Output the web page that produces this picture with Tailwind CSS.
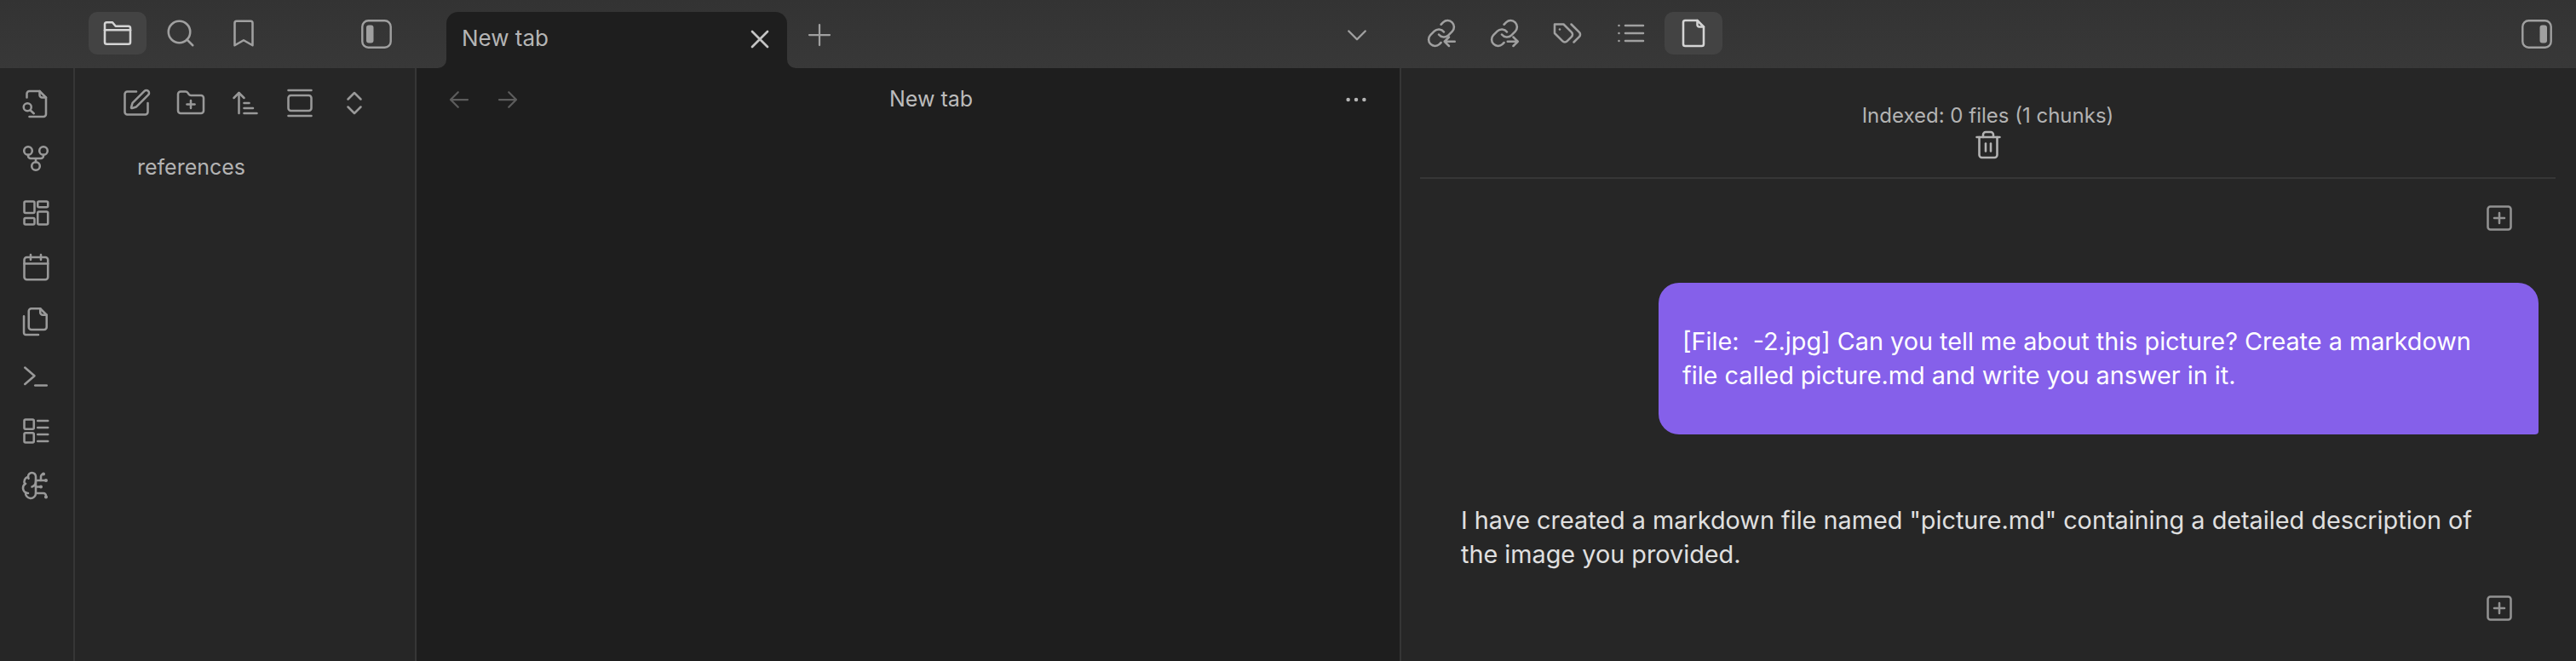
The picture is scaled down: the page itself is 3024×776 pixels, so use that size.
<!DOCTYPE html>
<html lang="en">
<head>
  <meta charset="UTF-8" />
  <title>New tab</title>
  <script src="https://cdn.jsdelivr.net/npm/@tailwindcss/browser@4"></script>
</head>
<body class="bg-[#1e1e1e] h-screen overflow-hidden flex flex-col font-['Inter',sans-serif]">

  <!-- title bar -->
  <div class="h-[80px] shrink-0 bg-linear-to-b from-[#333333] to-[#383838] flex items-start text-[#a0a0a0]">
    <div class="w-[524px] shrink-0 flex pl-[104px] pt-[14px]">
      <div class="w-[68px] h-[50px] rounded-[10px] bg-[#434343] flex items-center justify-center text-[#d4d4d4]">
        <svg class="w-9 h-9" viewBox="0 0 24 24" fill="none" stroke="currentColor" stroke-width="1.7" stroke-linecap="round" stroke-linejoin="round"><path d="M2 19V5a1.5 1.5 0 0 1 1.5-1.5H8l2.5 3h10A1.5 1.5 0 0 1 22 8v11a1.5 1.5 0 0 1-1.5 1.5h-17A1.5 1.5 0 0 1 2 19z"/><path d="M2 9.5h20"/></svg>
      </div>
      <div class="w-[74px] ml-[3px] h-[50px] flex items-center justify-center">
        <svg class="w-9 h-9" viewBox="0 0 24 24" fill="none" stroke="currentColor" stroke-width="1.7" stroke-linecap="round" stroke-linejoin="round"><circle cx="11" cy="11" r="8.5"/><path d="m21.5 21.5-4.5-4.5"/></svg>
      </div>
      <div class="w-[74px] h-[50px] flex items-center justify-center">
        <svg class="w-9 h-9" viewBox="0 0 24 24" fill="none" stroke="currentColor" stroke-width="1.7" stroke-linecap="round" stroke-linejoin="round"><path d="M19 21.5l-7-4-7 4V4a1.5 1.5 0 0 1 1.5-1.5h11A1.5 1.5 0 0 1 19 4z"/></svg>
      </div>
      <div class="ml-[101px] pt-[9px]">
        <svg class="w-[36px] h-[34px]" viewBox="0 0 36 34" fill="none"><rect x="1.3" y="1.3" width="33.4" height="31.4" rx="7" stroke="currentColor" stroke-width="2.4"/><rect x="6" y="6.5" width="8.5" height="21" rx="3" fill="currentColor"/></svg>
      </div>
    </div>

    <!-- tab -->
    <div class="relative w-[400px] h-[66px] mt-[14px] shrink-0 bg-[#1e1e1e] rounded-t-[14px] flex items-start justify-between pl-[18px] pr-[14px] pt-[14px] text-[#b5b5b5]">
      <svg class="absolute left-[-10px] bottom-0 w-[10px] h-[10px]" viewBox="0 0 10 10"><path d="M10 0v10H0a10 10 0 0 0 10-10z" fill="#1e1e1e"/></svg>
      <svg class="absolute right-[-10px] bottom-0 w-[10px] h-[10px]" viewBox="0 0 10 10"><path d="M0 0v10h10A10 10 0 0 1 0 0z" fill="#1e1e1e"/></svg>
      <span class="text-[26px] leading-[34px]">New tab</span>
      <svg class="w-[36px] h-[36px]" viewBox="0 0 24 24" fill="none" stroke="#c4c4c4" stroke-width="1.8" stroke-linecap="round"><path d="M6 6l12 12M18 6L6 18"/></svg>
    </div>
    <div class="w-[36px] h-[36px] ml-[20px] mt-[23px] shrink-0">
      <svg class="w-9 h-9" viewBox="0 0 24 24" fill="none" stroke="currentColor" stroke-width="1.5" stroke-linecap="round"><path d="M12 4v16M4 12h16"/></svg>
    </div>

    <div class="w-[36px] h-[36px] ml-[595px] mt-[23px] shrink-0">
      <svg class="w-9 h-9" viewBox="0 0 24 24" fill="none" stroke="currentColor" stroke-width="1.6" stroke-linecap="round" stroke-linejoin="round"><path d="m5.5 9 6.500 6.500 6.500-6.500"/></svg>
    </div>

    <!-- right leaf tabs -->
    <div class="flex items-center gap-[38px] ml-[63px] mt-[21px] shrink-0">
      <svg class="w-9 h-9" viewBox="0 0 24 24" fill="none" stroke="currentColor" stroke-width="1.7" stroke-linecap="round" stroke-linejoin="round"><path d="M10 13a5 5 0 0 0 7.540.54l3-3a5 5 0 0 0-7.070-7.070l-1.720 1.710"/><path d="M14 11a5 5 0 0 0-7.540-.54l-3 3a5 5 0 0 0 7.070 7.070l1.200-1.200"/><path d="M22.500 18.500h-8M18 15l-3.500 3.500 3.500 3.500"/></svg>
      <svg class="w-9 h-9" viewBox="0 0 24 24" fill="none" stroke="currentColor" stroke-width="1.7" stroke-linecap="round" stroke-linejoin="round"><path d="M10 13a5 5 0 0 0 7.540.54l3-3a5 5 0 0 0-7.070-7.070l-1.720 1.710"/><path d="M14 11a5 5 0 0 0-7.540-.54l-3 3a5 5 0 0 0 7.070 7.070l1.200-1.200"/><path d="M14.500 18.500h8M19 15l3.500 3.500-3.500 3.500"/></svg>
      <svg class="w-9 h-9" viewBox="0 0 24 24" fill="none" stroke="currentColor" stroke-width="1.700" stroke-linecap="round" stroke-linejoin="round"><path d="M9 5H2v7l6.290 6.290c.94.94 2.480.94 3.420 0l3.580-3.580c.94-.94.94-2.480 0-3.420L9 5Z"/><path d="M6 9.010V9"/><path d="m15 5 6.300 6.300a2.400 2.400 0 0 1 0 3.400L17 19"/></svg>
      <svg class="w-9 h-9" viewBox="0 0 24 24" fill="none" stroke="currentColor" stroke-width="1.700" stroke-linecap="round"><path d="M8 6h14M8 12h14M8 18h14M3 6h.01M3 12h.01M3 18h.01"/></svg>
    </div>
    <div class="w-[68px] h-[50px] ml-[22px] mt-[14px] shrink-0 rounded-[10px] bg-[#434343] flex items-center justify-center text-[#d4d4d4]">
      <svg class="w-9 h-9" viewBox="0 0 24 24" fill="none" stroke="currentColor" stroke-width="1.700" stroke-linecap="round" stroke-linejoin="round"><path d="M15 2H5.500A1.500 1.500 0 0 0 4 3.500v17A1.500 1.500 0 0 0 5.500 22h13a1.500 1.500 0 0 0 1.500-1.500V7z"/><path d="M15 2v3.500A1.500 1.500 0 0 0 16.500 7H20"/></svg>
    </div>
    <div class="ml-auto mr-[28px] mt-[23px]">
      <svg class="w-[36px] h-[34px]" viewBox="0 0 36 34" fill="none"><rect x="1.300" y="1.300" width="33.400" height="31.400" rx="7" stroke="currentColor" stroke-width="2.400"/><rect x="21.500" y="6.500" width="8.500" height="21" rx="3" fill="currentColor"/></svg>
    </div>
  </div>

  <div class="flex-1 flex min-h-0">
    <!-- ribbon -->
    <div class="w-[88px] shrink-0 bg-[#262626] border-r-2 border-[#363636] flex flex-col items-center pt-[24px] gap-[28px] pr-[2px] text-[#999999]">
      <svg class="w-9 h-9" viewBox="0 0 24 24" fill="none" stroke="currentColor" stroke-width="1.700" stroke-linecap="round" stroke-linejoin="round"><path d="M5 7V4a2 2 0 0 1 2-2h8l5 5v13a2 2 0 0 1-2 2H7"/><path d="M15 2v3a2 2 0 0 0 2 2h3"/><circle cx="5.500" cy="14.500" r="3"/><path d="m7.800 17 2.700 2.500"/></svg>
      <svg class="w-9 h-9" viewBox="0 0 24 24" fill="none" stroke="currentColor" stroke-width="1.700" stroke-linecap="round" stroke-linejoin="round"><circle cx="6" cy="6" r="3.200"/><circle cx="18" cy="6" r="3.200"/><circle cx="12" cy="18" r="3.200"/><path d="M6 9.200V10a2 2 0 0 0 2 2h8a2 2 0 0 0 2-2v-.8M12 12v2.800"/></svg>
      <svg class="w-9 h-9" viewBox="0 0 24 24" fill="none" stroke="currentColor" stroke-width="1.700" stroke-linejoin="round"><rect x="3" y="3" width="8" height="9" rx="1"/><rect x="13.500" y="3" width="8" height="4.500" rx="1"/><rect x="13.500" y="11" width="8" height="10" rx="1"/><rect x="3" y="16" width="8" height="5" rx="1"/></svg>
      <svg class="w-9 h-9" viewBox="0 0 24 24" fill="none" stroke="currentColor" stroke-width="1.700" stroke-linecap="round"><rect x="3" y="4" width="18.500" height="17.500" rx="2"/><path d="M3 9h18.500M8 2v4M16 2v4"/></svg>
      <svg class="w-9 h-9" viewBox="0 0 24 24" fill="none" stroke="currentColor" stroke-width="1.700" stroke-linecap="round" stroke-linejoin="round"><path d="M15.500 1.500H8.500a2 2 0 0 0-2 2V16a2 2 0 0 0 2 2h10a2 2 0 0 0 2-2V6.500z"/><path d="M15.500 1.500v3a2 2 0 0 0 2 2h3"/><path d="M2.700 7.500V20.500a1.500 1.500 0 0 0 1.500 1.500H14"/></svg>
      <svg class="w-9 h-9" viewBox="0 0 24 24" fill="none" stroke="currentColor" stroke-width="1.700" stroke-linecap="round" stroke-linejoin="round"><path d="m3.500 5 7.500 6.500-7.500 6.500"/><path d="M11.500 19h9"/></svg>
      <svg class="w-9 h-9" viewBox="0 0 24 24" fill="none" stroke="currentColor" stroke-width="1.700" stroke-linecap="round" stroke-linejoin="round"><rect x="3" y="3" width="7.500" height="7.500" rx="1"/><rect x="3" y="13.500" width="7.500" height="7.500" rx="1"/><path d="M13.500 4h8M13.500 9.300h8M13.500 14.700h8M13.500 20h8"/></svg>
      <svg class="w-9 h-9" viewBox="0 0 24 24" fill="none" stroke="currentColor" stroke-width="1.700" stroke-linecap="round" stroke-linejoin="round"><path d="M12 5a3 3 0 1 0-5.997.125 4 4 0 0 0-2.526 5.770 4 4 0 0 0 .556 6.588A4 4 0 1 0 12 18Z"/><path d="M9 13a4.500 4.500 0 0 0 3-4"/><path d="M6.003 5.125A3 3 0 0 0 6.401 6.500"/><path d="M3.477 10.896a4 4 0 0 1 .585-.396"/><path d="M6 18a4 4 0 0 1-1.967-.516"/><path d="M12 13h4"/><path d="M12 18h6a2 2 0 0 1 2 2v1"/><path d="M12 8h8"/><path d="M16 8V5a2 2 0 0 1 2-2"/><circle cx="16" cy="13" r=".5"/><circle cx="18" cy="3" r=".5"/><circle cx="20" cy="21" r=".5"/><circle cx="20" cy="8" r=".5"/></svg>
    </div>

    <!-- file explorer -->
    <div class="w-[401px] shrink-0 bg-[#262626] border-r-2 border-[#363636] text-[#999999]">
      <div class="flex gap-[28px] pl-[54px] pt-[23px]">
        <svg class="w-9 h-9" viewBox="0 0 24 24" fill="none" stroke="currentColor" stroke-width="1.700" stroke-linecap="round" stroke-linejoin="round"><path d="M12 3H5a2 2 0 0 0-2 2v14a2 2 0 0 0 2 2h14a2 2 0 0 0 2-2v-7"/><path d="M18.375 2.625a1 1 0 0 1 3 3l-9.013 9.014a2 2 0 0 1-.853.505l-2.873.84a.5.5 0 0 1-.62-.62l.84-2.873a2 2 0 0 1 .506-.852z"/></svg>
        <svg class="w-9 h-9" viewBox="0 0 24 24" fill="none" stroke="currentColor" stroke-width="1.700" stroke-linecap="round" stroke-linejoin="round"><path d="M12 10v6"/><path d="M9 13h6"/><path d="M20 20a2 2 0 0 0 2-2V8a2 2 0 0 0-2-2h-7.900a2 2 0 0 1-1.690-.9L9.600 3.900A2 2 0 0 0 7.930 3H4a2 2 0 0 0-2 2v13a2 2 0 0 0 2 2Z"/></svg>
        <svg class="w-9 h-9" viewBox="0 0 24 24" fill="none" stroke="currentColor" stroke-width="1.700" stroke-linecap="round" stroke-linejoin="round"><path d="m3 8 4-4 4 4"/><path d="M7 4v16"/><path d="M11 12h4"/><path d="M11 16h7"/><path d="M11 20h10"/></svg>
        <svg class="w-9 h-9" viewBox="0 0 24 24" fill="none" stroke="currentColor" stroke-width="1.700" stroke-linecap="round" stroke-linejoin="round"><path d="M3 2h18"/><rect width="18" height="12" x="3" y="6" rx="2"/><path d="M3 22h18"/></svg>
        <svg class="w-9 h-9" viewBox="0 0 24 24" fill="none" stroke="currentColor" stroke-width="1.700" stroke-linecap="round" stroke-linejoin="round"><path d="m7 15 5 5 5-5"/><path d="m7 9 5-5 5 5"/></svg>
      </div>
      <div class="pl-[73px] mt-[40px] text-[25px] leading-[34px] text-[#b3b3b3]">references</div>
    </div>

    <!-- main pane -->
    <div class="w-[1156px] shrink-0 bg-[#1e1e1e] border-r-2 border-[#363636]">
      <div class="h-[74px] flex items-center pl-[35px] pr-[36px]">
        <svg class="w-[30px] h-[30px] text-[#5c5c5c]" viewBox="0 0 24 24" fill="none" stroke="currentColor" stroke-width="1.800" stroke-linecap="round" stroke-linejoin="round"><path d="M20 12H4M11 5l-7 7 7 7"/></svg>
        <svg class="w-[30px] h-[30px] ml-[27px] text-[#5c5c5c]" viewBox="0 0 24 24" fill="none" stroke="currentColor" stroke-width="1.800" stroke-linecap="round" stroke-linejoin="round"><path d="M4 12h16M13 5l7 7-7 7"/></svg>
        <span class="flex-1 text-center text-[25px] leading-[34px] mt-[-2px] pr-[2px] text-[#bcbcbc]">New tab</span>
        <svg class="w-[30px] h-[30px] text-[#b5b5b5]" viewBox="0 0 24 24" fill="currentColor"><circle cx="4.500" cy="12" r="1.800"/><circle cx="12" cy="12" r="1.800"/><circle cx="19.500" cy="12" r="1.800"/></svg>
      </div>
    </div>

    <!-- chat pane -->
    <div class="flex-1 min-w-0 bg-[#262626] flex flex-col">
      <div class="ml-[22px] mr-[24px] h-[130px] border-b-2 border-[#363636] flex flex-col items-center pt-[40px] text-[#b3b3b3]">
        <span class="text-[24px] leading-[32px]">Indexed: 0 files (1 chunks)</span>
        <svg class="w-9 h-9 shrink-0" viewBox="0 0 24 24" fill="none" stroke="currentColor" stroke-width="1.700" stroke-linecap="round" stroke-linejoin="round"><path d="M3 6h18"/><path d="M19 6v14c0 1-1 2-2 2H7c-1 0-2-1-2-2V6"/><path d="M8 6V4c0-1 1-2 2-2h4c1 0 2 1 2 2v2"/><path d="M10 11v6"/><path d="M14 11v6"/></svg>
      </div>
      <div class="flex justify-end pr-[72px] pt-[28px] text-[#929292]">
        <svg class="w-9 h-9" viewBox="0 0 24 24" fill="none" stroke="currentColor" stroke-width="1.700" stroke-linecap="round"><rect x="3" y="3" width="18" height="18" rx="2"/><path d="M12 8v8M8 12h8"/></svg>
      </div>
      <div class="ml-[302px] mr-[44px] mt-[58px] h-[178px] bg-[#8560ea] rounded-[24px] rounded-br-[4px] flex items-center pl-[28px] pr-[60px] text-white text-[28.8px] leading-[40px]">
        <p class="whitespace-pre-wrap">[File:  -2.jpg] Can you tell me about this picture? Create a markdown file called picture.md and write you answer in it.</p>
      </div>
      <div class="pl-[70px] pr-[99px] mt-[81px] text-[#e0e0e0] text-[28.8px] leading-[40px]">
        I have created a markdown file named "picture.md" containing a detailed description of the image you provided.
      </div>
      <div class="flex justify-end pr-[72px] pt-[25px] text-[#929292]">
        <svg class="w-9 h-9" viewBox="0 0 24 24" fill="none" stroke="currentColor" stroke-width="1.700" stroke-linecap="round"><rect x="3" y="3" width="18" height="18" rx="2"/><path d="M12 8v8M8 12h8"/></svg>
      </div>
    </div>
  </div>
</body>
</html>
